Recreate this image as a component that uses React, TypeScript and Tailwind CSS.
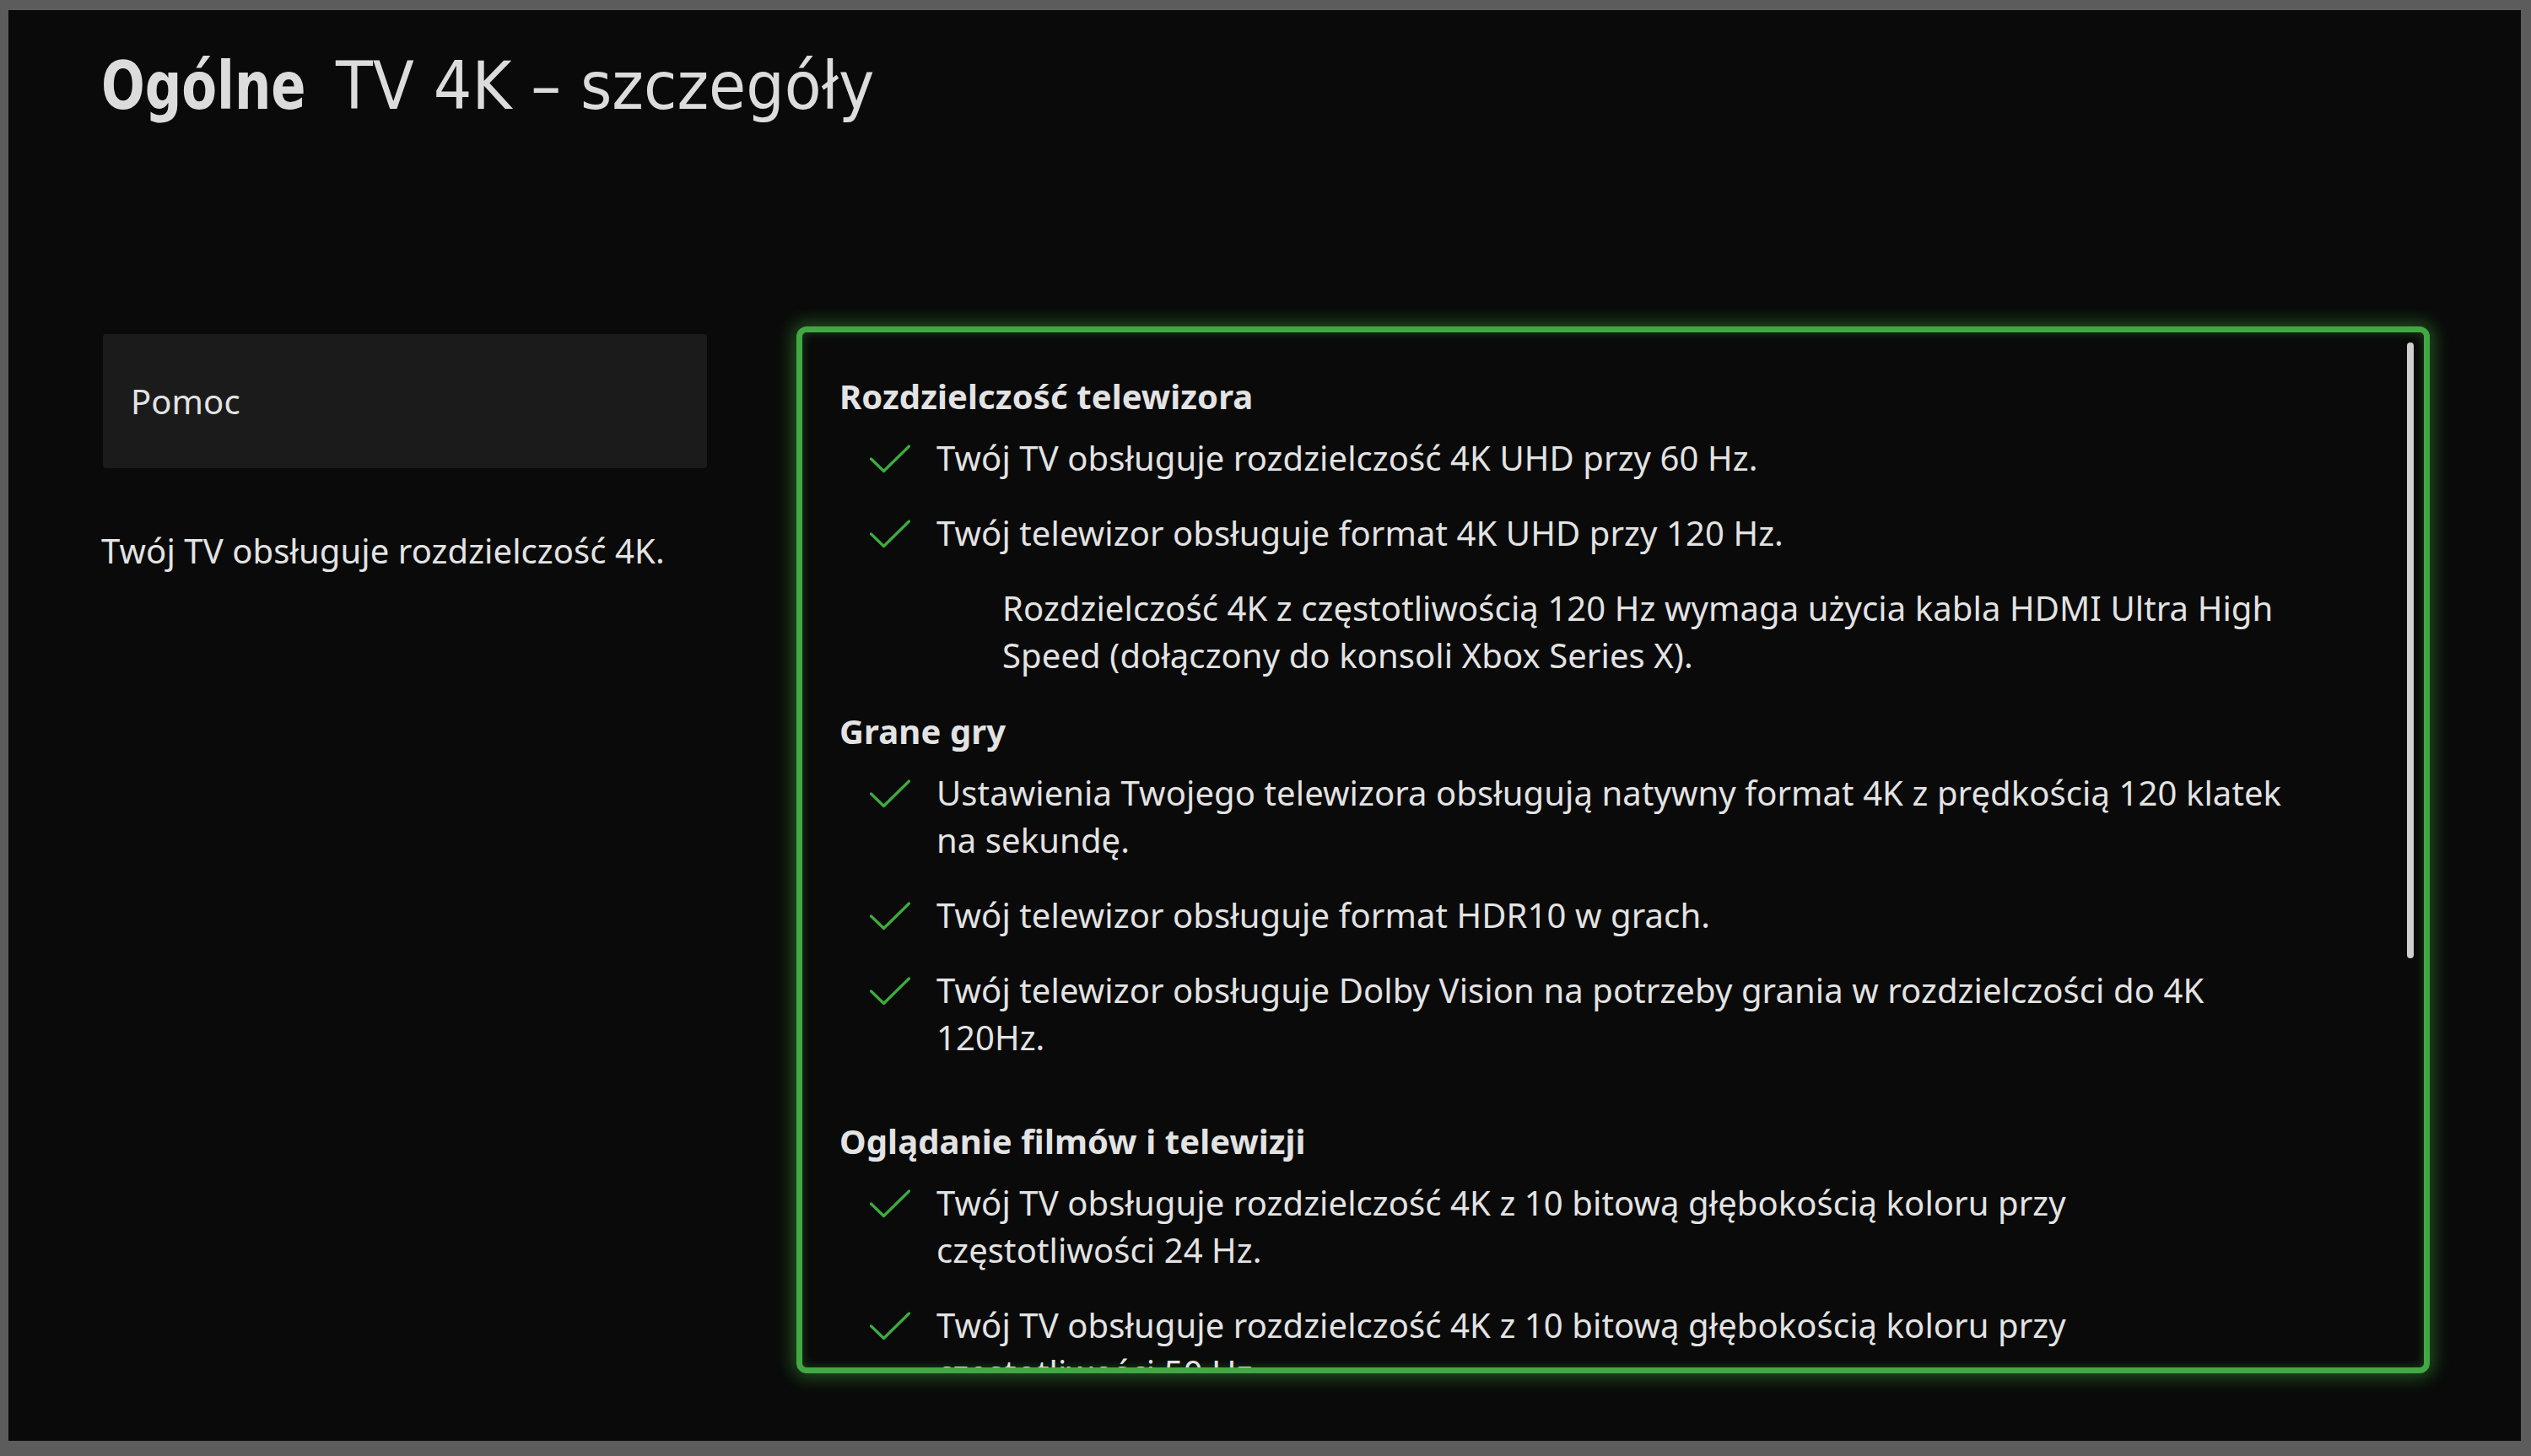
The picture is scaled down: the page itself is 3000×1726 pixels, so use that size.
import { ReactNode } from 'react';

type Entry =
    | { kind: 'check'; lines: string[] }
    | { kind: 'note'; lines: string[] };

interface Section {
    title: string
    entries: Entry[]
    extraTop?: boolean
}

const sections: Section[] = [
    {
        title: 'Rozdzielczość telewizora',
        entries: [
            { kind: 'check', lines: ['Twój TV obsługuje rozdzielczość 4K UHD przy 60 Hz.'] },
            { kind: 'check', lines: ['Twój telewizor obsługuje format 4K UHD przy 120 Hz.'] },
            {
                kind: 'note',
                lines: [
                    'Rozdzielczość 4K z częstotliwością 120 Hz wymaga użycia kabla HDMI Ultra High',
                    'Speed (dołączony do konsoli Xbox Series X).',
                ],
            },
        ],
    },
    {
        title: 'Grane gry',
        entries: [
            {
                kind: 'check',
                lines: [
                    'Ustawienia Twojego telewizora obsługują natywny format 4K z prędkością 120 klatek',
                    'na sekundę.',
                ],
            },
            { kind: 'check', lines: ['Twój telewizor obsługuje format HDR10 w grach.'] },
            {
                kind: 'check',
                lines: [
                    'Twój telewizor obsługuje Dolby Vision na potrzeby grania w rozdzielczości do 4K',
                    '120Hz.',
                ],
            },
        ],
    },
    {
        title: 'Oglądanie filmów i telewizji',
        extraTop: true,
        entries: [
            {
                kind: 'check',
                lines: [
                    'Twój TV obsługuje rozdzielczość 4K z 10 bitową głębokością koloru przy',
                    'częstotliwości 24 Hz.',
                ],
            },
            {
                kind: 'check',
                lines: [
                    'Twój TV obsługuje rozdzielczość 4K z 10 bitową głębokością koloru przy',
                    'częstotliwości 50 Hz.',
                ],
            },
        ],
    },
];

function CheckMark() {
    return (
        <svg width="48" height="34" viewBox="0 0 48 34" className="flex-shrink-0 mt-[12px]">
            <polyline
                points="1.5,17 16.5,31.5 46.5,2"
                fill="none"
                stroke="#3cad3c"
                strokeWidth="3.2"
                strokeLinecap="round"
                strokeLinejoin="round"
            />
        </svg>
    );
}

function Lines({ lines }: { lines: string[] }) {
    return (
        <div className="flex flex-col">
            {lines.map((line) => (
                <span key={line} className="whitespace-nowrap">{line}</span>
            ))}
        </div>
    );
}

function EntryRow({ entry }: { entry: Entry }): ReactNode {
    if (entry.kind === 'note') {
        return (
            <div className="pl-[193px]">
                <Lines lines={entry.lines} />
            </div>
        );
    }
    return (
        <div className="flex items-start gap-[31px] pl-[36px]">
            <CheckMark />
            <Lines lines={entry.lines} />
        </div>
    );
}

export default function App() {
    return (
        <div className="w-[3000px] h-[1726px] bg-[#5c5c5c] pt-[12px] pl-[10px] pr-[12px] pb-[18px]">
            <div className="w-full h-full bg-[#0a0a0a] flex flex-col pl-[110px] text-[#e3e3e3] font-['Noto_Sans','Open_Sans',sans-serif] text-[40px] tracking-[0.1px] leading-[56px] overflow-hidden">
                {/* page title, narrow display face */}
                <h1 className="mt-[51px] flex items-baseline text-[78px] leading-none tracking-normal text-[#dcdcdc] font-['DejaVu_Sans',sans-serif]">
                    <span className="inline-block w-[278px] whitespace-nowrap">
                        <span className="inline-block origin-left scale-x-[0.78] font-bold">Ogólne</span>
                    </span>
                    <span className="inline-block whitespace-nowrap">
                        <span className="inline-block origin-left scale-x-[0.92] font-normal">TV 4K – szczegóły</span>
                    </span>
                </h1>

                <div className="flex items-start gap-[106px] mt-[246px]">
                    {/* left column */}
                    <div className="w-[718px] flex flex-col pt-[9px] pl-[2px]">
                        <div className="h-[159px] rounded-[4px] bg-[#1b1b1b] flex items-center pl-[33px]">
                            Pomoc
                        </div>
                        <p className="mt-[70px] -ml-[2px]">Twój TV obsługuje rozdzielczość 4K.</p>
                    </div>

                    {/* details panel */}
                    <div className="relative w-[1936px] h-[1241px] rounded-[12px] border-[7px] border-[#43a843] shadow-[0_0_20px_5px_rgba(60,170,60,0.45),inset_0_0_12px_rgba(60,170,60,0.35)] overflow-hidden">
                        <div className="flex flex-col pt-[48px] pl-[44px]">
                            {sections.map((section, i) => (
                                <section
                                    key={section.title}
                                    className={i === 0 ? '' : section.extraTop ? 'mt-[67px]' : 'mt-[34px]'}
                                >
                                    <h2 className="font-bold">{section.title}</h2>
                                    <div className="flex flex-col gap-[33px] mt-[17px]">
                                        {section.entries.map((entry, j) => (
                                            <EntryRow key={j} entry={entry} />
                                        ))}
                                    </div>
                                </section>
                            ))}
                        </div>
                        <div className="absolute top-[12px] right-[12px] w-[8px] h-[730px] rounded-full bg-[#cfcfcf]" />
                    </div>
                </div>
            </div>
        </div>
    );
}
